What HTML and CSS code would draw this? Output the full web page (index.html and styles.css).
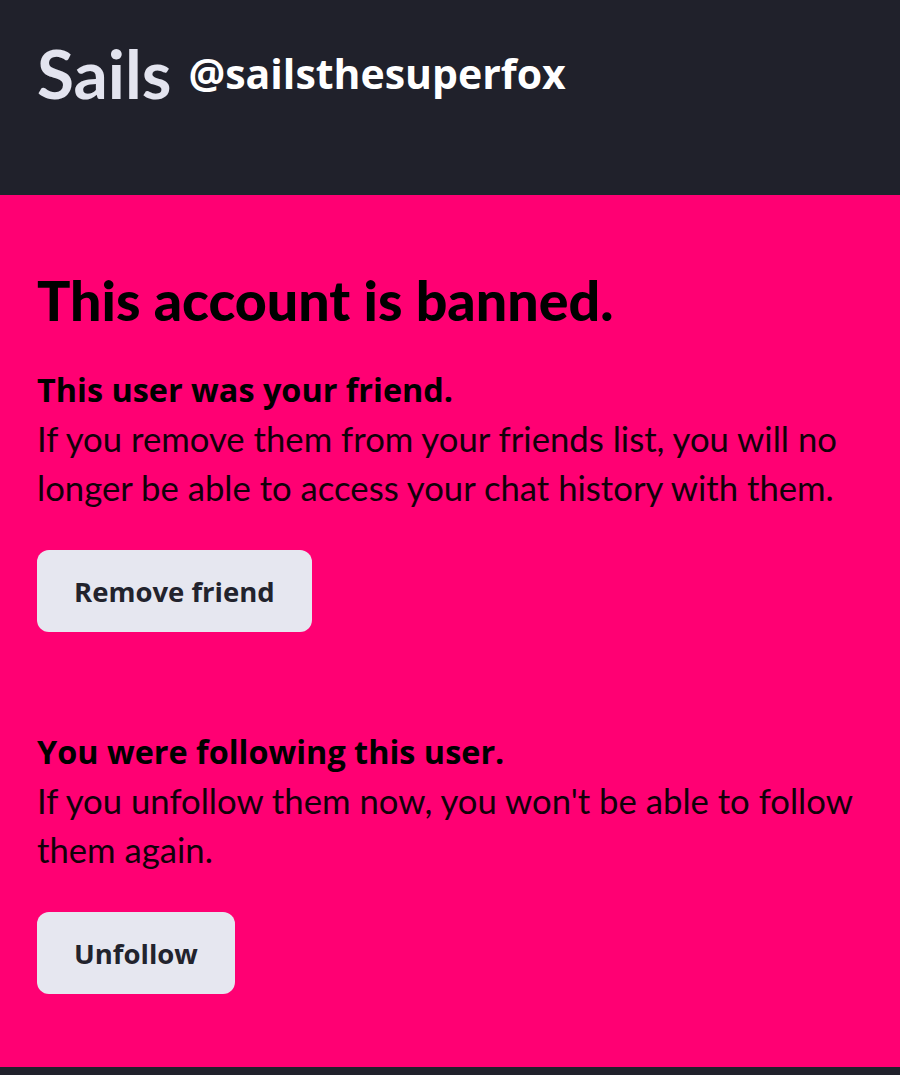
FILE: index.html
```html
<!DOCTYPE html>
<html>
<head>
<meta charset="utf-8">
<link rel="stylesheet" href="styles.css">
</head>
<body>
<header class="topbar">
  <span class="brand">Sails</span>
  <span class="handle">@sailsthesuperfox</span>
</header>
<main class="panel">
  <h1 class="title">This account is banned.</h1>
  <section class="block">
    <h2 class="subtitle">This user was your friend.</h2>
    <p class="desc">If you remove them from your friends list, you will no longer be able to access your chat history with them.</p>
    <button class="btn">Remove friend</button>
  </section>
  <section class="block second">
    <h2 class="subtitle">You were following this user.</h2>
    <p class="desc">If you unfollow them now, you won't be able to follow them again.</p>
    <button class="btn">Unfollow</button>
  </section>
</main>
<footer class="bottombar"></footer>
</body>
</html>
```
FILE: styles.css
```css
html, body {
  margin: 0;
  padding: 0;
  background: #20212b;
}
body {
  width: 900px;
  height: 1075px;
  overflow: hidden;
  font-family: "Open Sans", Lato, "Liberation Sans", sans-serif;
}
.topbar {
  height: 195px;
  box-sizing: border-box;
  background: #20212b;
  display: flex;
  align-items: center;
  gap: 17px;
  padding: 33px 37px 82px;
}
.brand {
  font-family: Lato, sans-serif;
  font-weight: 700;
  font-size: 67.5px;
  line-height: 80px;
  color: #e3e4ef;
}
.handle {
  font-family: "Open Sans", Lato, sans-serif;
  font-weight: 700;
  font-size: 41px;
  line-height: 80px;
  color: #ffffff;
}
.panel {
  background: #ff0073;
  height: 872px;
  box-sizing: border-box;
  padding: 70px 37px 0;
  color: #000;
}
.title {
  margin: 0;
  font-family: Lato, sans-serif;
  font-weight: 900;
  font-size: 55.5px;
  line-height: 70px;
}
.block {
  margin-top: 32px;
}
.block.second {
  margin-top: 97px;
}
.subtitle {
  margin: 0;
  font-family: "Open Sans", Lato, sans-serif;
  font-weight: 700;
  font-size: 32.4px;
  line-height: 44px;
}
.desc {
  margin: 3px 0 0;
  font-family: Lato, sans-serif;
  font-weight: 400;
  font-size: 34.7px;
  line-height: 49px;
  color: #12000a;
}
.btn {
  margin-top: 38px;
  display: block;
  border: none;
  background: #e6e7f0;
  color: #22232d;
  border-radius: 12px;
  height: 82px;
  padding: 0 37px;
  font-family: "Open Sans", Lato, sans-serif;
  font-weight: 700;
  font-size: 27.5px;
}
.bottombar {
  height: 8px;
  background: #20212b;
}
```
